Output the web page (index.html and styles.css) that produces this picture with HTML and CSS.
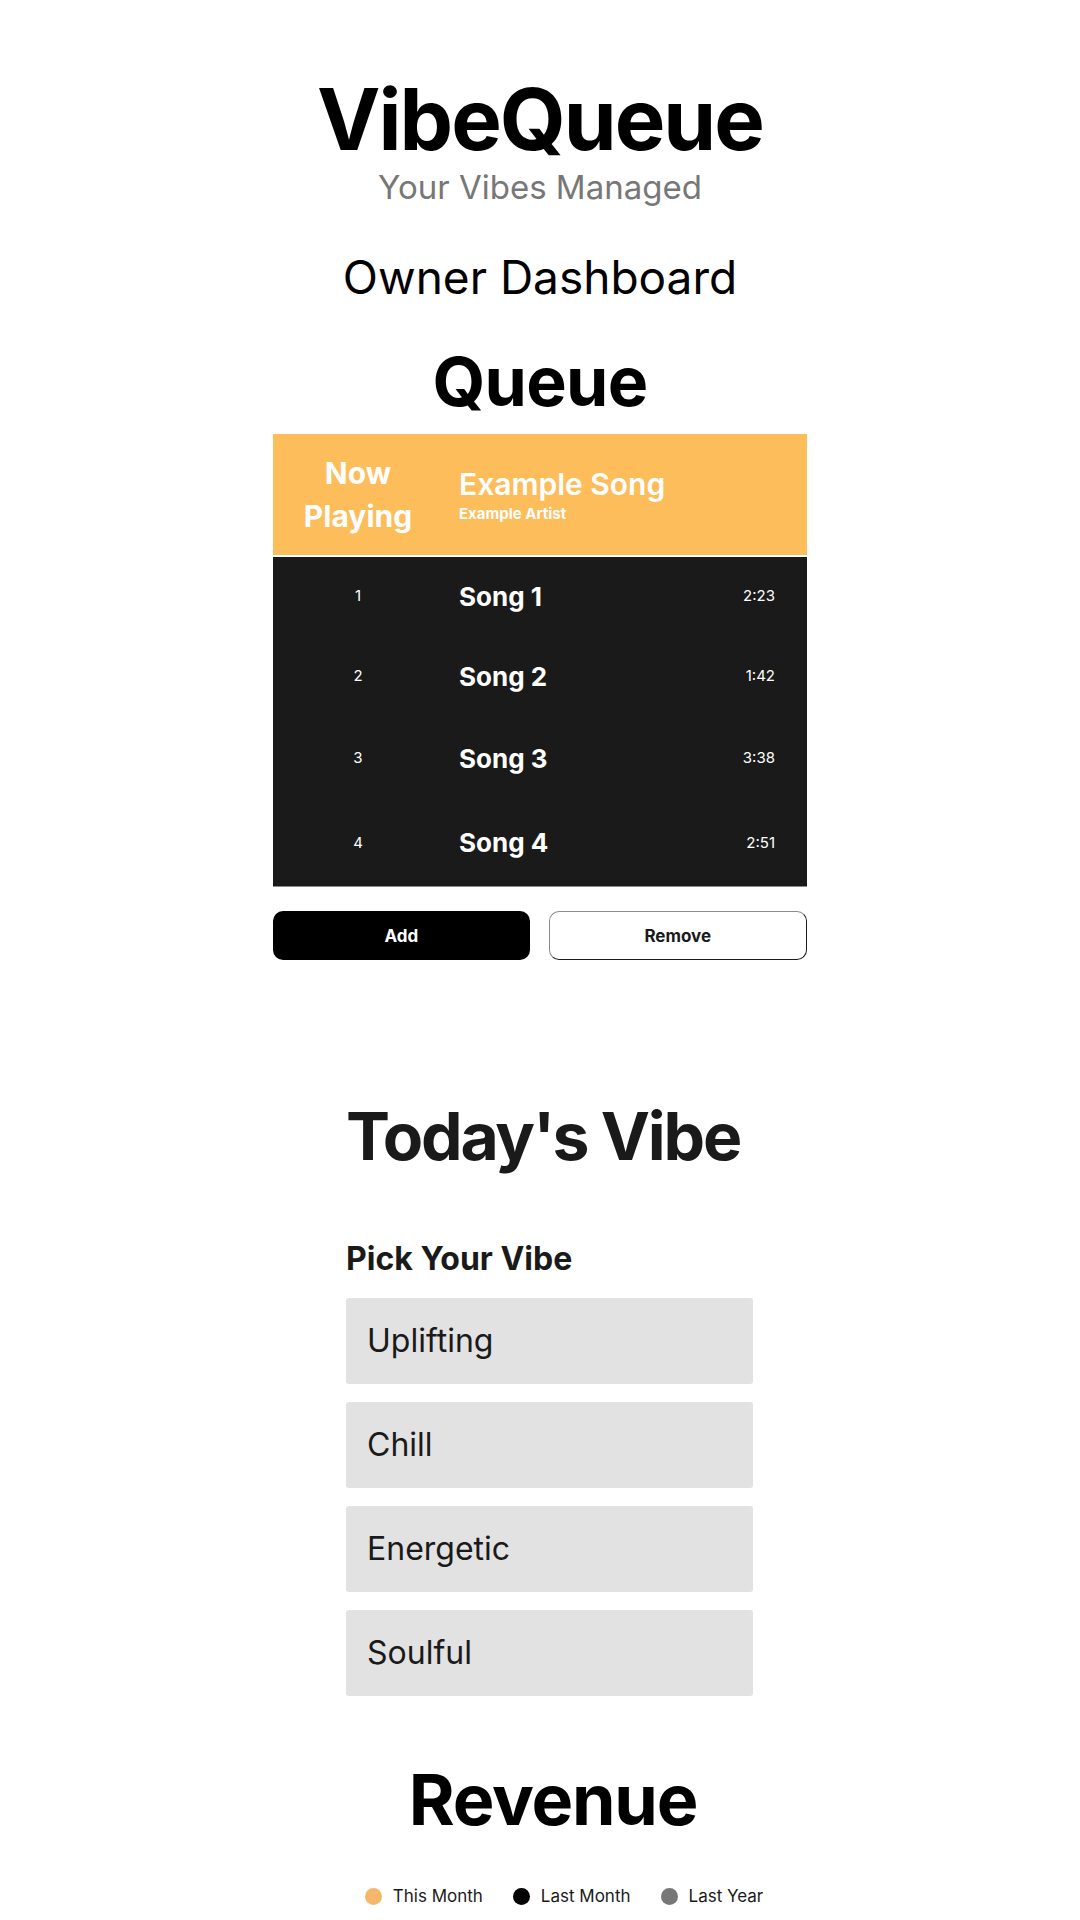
FILE: index.html
```html
<!DOCTYPE html>
<html lang="en">
  <head>
    <meta charset="UTF-8" />
    <meta name="viewport" content="width=device-width, initial-scale=1.0" />
    <title>VibeQueue - Owner Dashboard</title>
    <link rel="stylesheet" href="styles.css">
  </head>
  <body>
    <header class="site-header">
      <h1 class="brand">VibeQueue</h1>
      <p class="tagline">Your Vibes Managed</p>
      <h2 class="page-title">Owner Dashboard</h2>
    </header>

    <section class="queue">
      <h2 class="queue-title">Queue</h2>

      <div class="now-playing">
        <div class="np-label">Now<br />Playing</div>
        <div class="np-song">
          <span class="np-title">Example Song</span>
          <span class="np-artist">Example Artist</span>
        </div>
      </div>

      <ul class="song-list">
        <li class="song-item">
          <span class="song-number">1</span>
          <span class="song-name">Song 1</span>
          <span class="song-time">2:23</span>
        </li>
        <li class="song-item">
          <span class="song-number">2</span>
          <span class="song-name">Song 2</span>
          <span class="song-time">1:42</span>
        </li>
        <li class="song-item">
          <span class="song-number">3</span>
          <span class="song-name">Song 3</span>
          <span class="song-time">3:38</span>
        </li>
        <li class="song-item">
          <span class="song-number">4</span>
          <span class="song-name">Song 4</span>
          <span class="song-time">2:51</span>
        </li>
      </ul>

      <div class="queue-actions">
        <button type="button" class="btn btn-add">Add</button>
        <button type="button" class="btn btn-remove">Remove</button>
      </div>
    </section>

    <section class="vibe">
      <h2 class="vibe-title">Today's Vibe</h2>
      <h3 class="vibe-label">Pick Your Vibe</h3>
      <ul class="vibe-list">
        <li class="vibe-item">Uplifting</li>
        <li class="vibe-item">Chill</li>
        <li class="vibe-item">Energetic</li>
        <li class="vibe-item">Soulful</li>
      </ul>
    </section>

    <section class="revenue">
      <h2 class="revenue-title">Revenue</h2>
      <ul class="legend">
        <li class="legend-item"><span class="dot dot-this-month"></span>This Month</li>
        <li class="legend-item"><span class="dot dot-last-month"></span>Last Month</li>
        <li class="legend-item"><span class="dot dot-last-year"></span>Last Year</li>
      </ul>
    </section>
  </body>
</html>
```

FILE: styles.css
```css
* {
  margin: 0;
  padding: 0;
  box-sizing: border-box;
}

body {
  font-family: Inter, "Noto Sans", sans-serif;
  color: #000;
  background: #fff;
  line-height: 1.2;
}

ul {
  list-style: none;
}

/* header */
.site-header {
  padding-top: 77px;
  text-align: center;
}
.brand {
  font-size: 85px;
  font-weight: 700;
  line-height: 1;
  letter-spacing: -2px;
}
.tagline {
  margin-top: 6px;
  font-size: 33px;
  color: #777;
}
.page-title {
  margin-top: 42px;
  font-size: 46px;
  font-weight: 400;
}

/* queue */
.queue {
  width: 534px;
  margin: 36px auto 0;
}
.queue-title {
  font-size: 68px;
  font-weight: 700;
  text-align: center;
  letter-spacing: -0.7px;
  margin-bottom: 12px;
}

.now-playing {
  display: grid;
  grid-template-columns: 170px 1fr;
  align-items: center;
  height: 123px;
  background: #fdbd5b;
  color: #fff;
  border-bottom: 2px solid #fff;
}
.np-label {
  font-size: 30px;
  font-weight: 700;
  line-height: 43px;
  text-align: center;
}
.np-song {
  display: flex;
  flex-direction: column;
  gap: 3px;
  padding-left: 16px;
}
.np-title {
  font-size: 30px;
  font-weight: 600;
}
.np-artist {
  font-size: 15px;
  font-weight: 700;
}

.song-list {
  background: #1a1a1a;
  color: #fff;
  border-bottom: 1px solid #8a8a8a;
}
.song-item {
  display: grid;
  grid-template-columns: 170px 1fr auto;
  align-items: center;
  height: 82px;
}
.song-item:first-child {
  height: 78px;
}
.song-item:last-child {
  height: 87px;
}
.song-number {
  font-size: 15px;
  text-align: center;
}
.song-name {
  font-size: 26px;
  font-weight: 700;
  padding-left: 16px;
}
.song-time {
  font-size: 15px;
  padding-right: 32px;
}

.queue-actions {
  display: flex;
  gap: 19px;
  margin-top: 24px;
}
.btn {
  flex: 1;
  height: 49px;
  border-radius: 10px;
  font-family: inherit;
  font-size: 17px;
  font-weight: 700;
  cursor: pointer;
}
.btn-add {
  background: #000;
  color: #fff;
  border: 0;
}
.btn-remove {
  background: #fff;
  color: #1a1a1a;
  border: 1px solid #1a1a1a;
  border-top-color: #8c8c8c;
  border-left-color: #8c8c8c;
}

/* today's vibe */
.vibe {
  width: 407px;
  margin: 137px 0 0 calc(50% - 194px);
  color: #1a1a1a;
}
.vibe-title {
  font-size: 66px;
  font-weight: 700;
  letter-spacing: -2.2px;
  white-space: nowrap;
}
.vibe-label {
  margin-top: 63px;
  font-size: 32px;
  font-weight: 700;
}
.vibe-list {
  margin-top: 20px;
  display: flex;
  flex-direction: column;
  gap: 18px;
}
.vibe-item {
  display: flex;
  align-items: center;
  height: 86px;
  padding-left: 21px;
  background: #e2e2e2;
  border-radius: 3px;
  font-size: 32px;
}

/* revenue */
.revenue {
  width: 440px;
  margin: 62px 0 0 calc(50% - 196px);
}
.revenue-title {
  font-size: 70px;
  font-weight: 700;
  letter-spacing: -1.2px;
  text-align: center;
  padding-right: 22px;
}
.legend {
  display: flex;
  justify-content: center;
  gap: 30px;
  margin-top: 44px;
  font-size: 17px;
  color: #1a1a1a;
}
.legend-item {
  display: flex;
  align-items: center;
  gap: 11px;
}
.dot {
  width: 17px;
  height: 17px;
  border-radius: 50%;
}
.dot-this-month {
  background: #f4b76b;
}
.dot-last-month {
  background: #000;
}
.dot-last-year {
  background: #777;
}
```
